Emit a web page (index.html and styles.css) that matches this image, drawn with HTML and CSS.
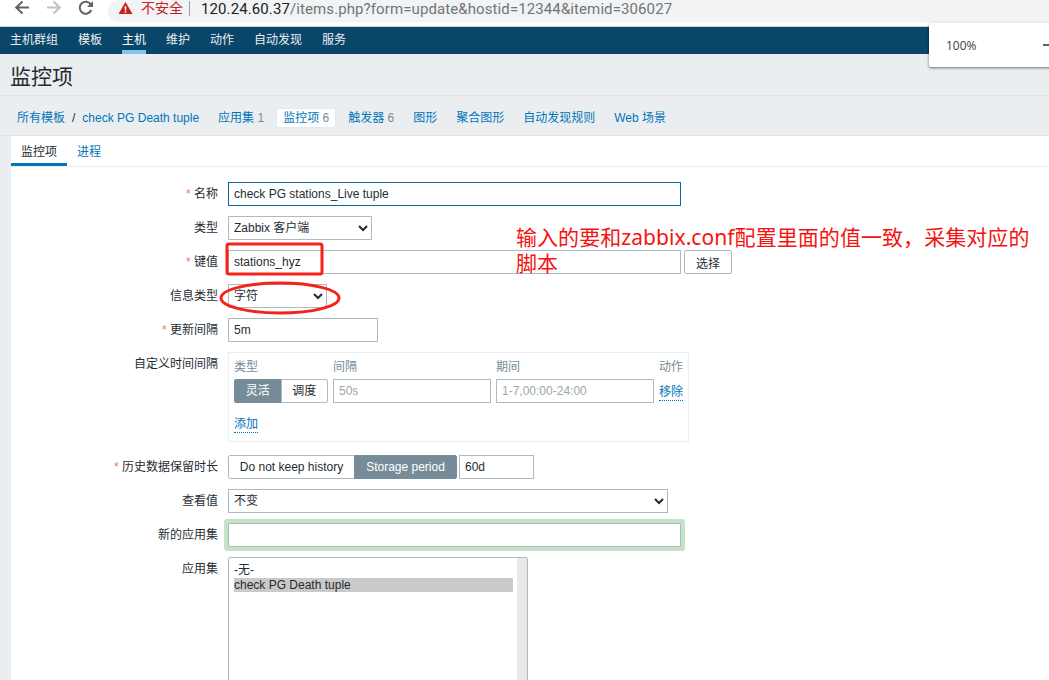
FILE: index.html
```html
<!DOCTYPE html>
<html lang="zh">
<head>
<meta charset="utf-8">
<title>监控项</title>
<link rel="stylesheet" href="styles.css">
</head>
<body>
<div class="toolbar">
  <svg class="tb-icon" width="16" height="16" viewBox="0 0 16 16"><path d="M15 7.5H3M8.5 1.5 2.2 7.5l6.3 6" fill="none" stroke="#5f6368" stroke-width="2"/></svg>
  <svg class="tb-icon" width="16" height="16" viewBox="0 0 16 16"><path d="M1 7.5h12M7.5 1.5l6.3 6-6.3 6" fill="none" stroke="#bdc1c6" stroke-width="2"/></svg>
  <svg class="tb-icon" width="16" height="16" viewBox="0 0 16 16"><path d="M13.3 10a6 6 0 1 1-.3-5.2" fill="none" stroke="#5f6368" stroke-width="2"/><path d="M15 1v6H9z" fill="#5f6368"/></svg>
  <div class="urlbar">
    <svg width="15" height="14" viewBox="0 0 16 14"><path d="M8 .5 15.5 13.5H.5z" fill="#c5221f"/><path d="M7.2 5h1.6v4.6H7.2zM7.2 10.4h1.6V12H7.2z" fill="#fff"/></svg>
    <span class="insecure">不安全</span>
    <span class="url-sep"></span>
    <span class="url"><span class="url-host">120.24.60.37</span>/items.php?form=update&amp;hostid=12344&amp;itemid=306027</span>
  </div>
</div>

<nav class="topnav">
  <a class="nav-item">主机群组</a>
  <a class="nav-item">模板</a>
  <a class="nav-item active">主机</a>
  <a class="nav-item">维护</a>
  <a class="nav-item">动作</a>
  <a class="nav-item">自动发现</a>
  <a class="nav-item">服务</a>
</nav>

<header class="page-title"><h1>监控项</h1></header>

<div class="crumbs">
  <a class="crumb first">所有模板</a><span class="slash">/</span><a class="crumb host">check PG Death tuple</a>
  <a class="crumb">应用集 <span class="count">1</span></a>
  <a class="crumb current">监控项 <span class="count">6</span></a>
  <a class="crumb">触发器 <span class="count">6</span></a>
  <a class="crumb">图形</a>
  <a class="crumb">聚合图形</a>
  <a class="crumb">自动发现规则</a>
  <a class="crumb">Web 场景</a>
</div>

<main class="panel">
  <div class="tabs">
    <a class="tab active">监控项</a>
    <a class="tab">进程</a>
  </div>

  <form class="form">
    <label class="lbl"><i>*</i> 名称</label>
    <div class="field"><input class="input w-453 focused" value="check PG stations_Live tuple"></div>

    <label class="lbl">类型</label>
    <div class="field"><select class="select w-144"><option>Zabbix 客户端</option></select></div>

    <label class="lbl"><i>*</i> 键值</label>
    <div class="field"><input class="input w-453" value="stations_hyz"><button type="button" class="btn">选择</button></div>

    <label class="lbl">信息类型</label>
    <div class="field"><select class="select w-99"><option>字符</option></select></div>

    <label class="lbl"><i>*</i> 更新间隔</label>
    <div class="field"><input class="input w-150" value="5m"></div>

    <label class="lbl">自定义时间间隔</label>
    <div class="field">
      <div class="intervals">
        <span class="th">类型</span><span class="th">间隔</span><span class="th">期间</span><span class="th">动作</span>
        <div class="seg"><span class="seg-btn on w-48">灵活</span><span class="seg-btn w-47">调度</span></div>
        <input class="input ph" placeholder="50s">
        <input class="input ph" placeholder="1-7,00:00-24:00">
        <a class="dotted">移除</a>
        <a class="dotted add">添加</a>
      </div>
    </div>

    <label class="lbl hist"><i>*</i> 历史数据保留时长</label>
    <div class="field hist">
      <div class="seg"><span class="seg-btn w-127">Do not keep history</span><span class="seg-btn on w-103">Storage period</span></div>
      <input class="input w-75" value="60d">
    </div>

    <label class="lbl">查看值</label>
    <div class="field"><select class="select w-440"><option>不变</option></select></div>

    <label class="lbl">新的应用集</label>
    <div class="field"><input class="input w-453 glow"></div>

    <label class="lbl">应用集</label>
    <div class="field">
      <div class="listbox">
        <div class="options">
          <div class="opt">-无-</div>
          <div class="opt sel">check PG Death tuple</div>
        </div>
        <div class="scroll"></div>
      </div>
    </div>
  </form>
</main>

<div class="zoom-pop"><span>100%</span><span class="minus"></span></div>

<svg class="mark mark-rect" width="102" height="36" viewBox="0 0 102 36"><rect x="2" y="2" width="95" height="30" rx="2" fill="none" stroke="#f5211a" stroke-width="3"/></svg>
<svg class="mark mark-oval" width="124" height="36" viewBox="0 0 124 36"><ellipse cx="61" cy="17" rx="59" ry="15" fill="none" stroke="#f5211a" stroke-width="3"/></svg>
<div class="note"><span>输入的要和<span class="note-latin">zabbix.conf</span>配置里面的值一致，采集对应的</span><span>脚本</span></div>
</body>
</html>
```
FILE: styles.css
```css
* { box-sizing: border-box; }
html, body { margin: 0; height: 680px; overflow: hidden; }
body {
  position: relative;
  background: #ebeef0;
  color: #1f2c33;
  font: 12px/14px "Liberation Sans", "Noto Sans CJK SC", sans-serif;
}

/* browser chrome */
.toolbar {
  height: 27px;
  background: #fff;
  border-bottom: 1px solid #d4d4d4;
  display: flex;
  align-items: flex-start;
  padding-left: 14px;
}
.tb-icon { margin-right: 16px; flex: none; }
.tb-icon:nth-child(3) { margin-right: 14px; }
.urlbar {
  flex: 1;
  height: 22px;
  background: #f1f3f4;
  border-radius: 14px 0 0 14px;
  display: flex;
  align-items: flex-start;
  padding: 1px 0 0 10px;
  white-space: nowrap;
}
.insecure { color: #c5221f; font-size: 14px; line-height: 14px; margin-left: 8px; }
.url-sep { width: 1px; height: 15px; background: #9aa0a6; margin: 0 11px 0 6px; }
.url { font: 15px/18px Roboto, sans-serif; color: #70757a; margin-top: -1px; letter-spacing: .1px; }
.url-host { color: #202124; }

/* top navigation */
.topnav {
  height: 27px;
  background: #0a466a;
  display: flex;
  gap: 20px;
  padding-left: 10px;
}
.nav-item {
  color: #ebeef0;
  height: 27px;
  line-height: 27px;
  border-bottom: 4px solid transparent;
}
.nav-item.active { border-bottom-color: #7fc5ef; color: #fff; }

.page-title {
  height: 42px;
  padding-left: 10px;
  border-bottom: 1px solid #dfe4e7;
}
.page-title h1 {
  margin: 0;
  font-size: 21px;
  font-weight: 400;
  line-height: 45px;
}

.crumbs {
  height: 40px;
  display: flex;
  align-items: center;
  padding: 4px 0 0 17px;
  border-bottom: 1px solid #dfe4e7;
  white-space: nowrap;
}
.crumb { color: #0275b8; margin-right: 19px; }
.crumb.first { margin-right: 0; }
.slash { color: #1f2c33; margin: 0 7px 0 7px; }
.crumb.current {
  background: #fff;
  border: 1px solid #e6e9eb;
  border-radius: 2px;
  padding: 2px 6px;
  margin: 0 12px 0 -7px;
}
.count { color: #768d99; }

/* content */
.panel {
  margin-left: 11px;
  background: #fff;
  height: 560px;
  overflow: hidden;
}
.tabs {
  height: 31px;
  display: flex;
  border-bottom: 1px solid #ebeef0;
}
.tab {
  padding: 9px 10px 0;
  height: 30px;
  color: #0275b8;
}
.tab.active { color: #1f2c33; border-bottom: 3px solid #0275b8; }
.form {
  display: grid;
  grid-template-columns: 207px 1fr;
  column-gap: 10px;
  row-gap: 10px;
  padding-top: 15px;
}
.lbl { text-align: right; line-height: 24px; color: #1f2c33; }
.lbl i { color: #e5746a; font-style: normal; }
.field { display: flex; align-items: flex-start; }
.lbl.hist, .field.hist { margin-top: 3px; }

.input, .select, .btn {
  height: 24px;
  border: 1px solid #acbbc2;
  background: #fff;
  color: #1f2c33;
  font: 12px "Liberation Sans", "Noto Sans CJK SC", sans-serif;
  border-radius: 0;
  outline: 0;
}
.input { padding: 0 5px; }
.select { padding: 0 0 0 1px; }
.input.focused { border-color: #0a6aa1; }
.input::placeholder { color: #9aa7ae; }
.w-453 { width: 453px; }
.w-150 { width: 150px; }
.w-144 { width: 144px; }
.w-99 { width: 99px; }
.w-440 { width: 440px; }
.w-75 { width: 75px; margin-left: 2px; }
.btn {
  width: 48px;
  margin-left: 3px;
  border-radius: 2px;
  padding: 0;
}
.input.glow { box-shadow: 0 0 0 4px #c6e2c8; border-radius: 1px; }

.intervals {
  width: 461px;
  height: 90px;
  border: 1px solid #ebeef0;
  padding: 5px;
  display: grid;
  grid-template-columns: 94px 158px 158px 25px;
  grid-template-rows: 15px 24px auto;
  column-gap: 5px;
  row-gap: 6px;
  align-content: start;
}
.th { color: #768d99; line-height: 19px; }
.seg { display: flex; }
.seg-btn {
  height: 24px;
  line-height: 23px;
  text-align: center;
  border: 1px solid #acbbc2;
  background: #fff;
  display: block;
}
.seg-btn:first-child { border-radius: 2px 0 0 2px; }
.seg-btn:last-child { border-radius: 0 2px 2px 0; margin-left: -1px; }
.seg-btn.on { background: #768d99; border-color: #768d99; color: #fff; }
.w-48 { width: 48px; }
.w-47 { width: 48px; }
.seg-btn.w-47 { width: 48px; }
.w-127 { width: 127px; }
.w-103 { width: 103px; }
.input.ph { width: 158px; }
.dotted {
  color: #0275b8;
  border-bottom: 1px dotted #0275b8;
  align-self: center;
  justify-self: start;
  line-height: 15px;
  margin-top: 3px;
}
.add { grid-column: 1; margin-top: 8px; align-self: start; }

.listbox {
  width: 300px;
  height: 140px;
  border: 1px solid #acbbc2;
  border-radius: 2px 2px 0 0;
  display: flex;
}
.options { flex: 1; padding: 5px 4px 0 5px; }
.opt { line-height: 14px; height: 14px; color: #1f2c33; }
.sel { background: #cacaca; margin-top: 1px; }
.scroll { width: 10px; background: #e9e9e9; }

/* overlays */
.zoom-pop {
  position: absolute;
  left: 929px;
  top: 23px;
  width: 130px;
  height: 44px;
  background: #fff;
  border-radius: 2px;
  box-shadow: 0 1px 3px rgba(0,0,0,.55);
  display: flex;
  align-items: center;
  padding: 2px 0 0 17px;
  color: #3c4043;
  font-family: "Open Sans", sans-serif;
}
.minus {
  position: absolute;
  left: 114px;
  top: 21px;
  width: 8px;
  height: 2px;
  background: #5f6368;
}
.mark { position: absolute; }
.mark-rect { left: 225px; top: 242px; }
.mark-oval { left: 219px; top: 281px; }
.note {
  position: absolute;
  left: 516px;
  top: 224px;
  display: flex;
  flex-direction: column;
  align-items: flex-start;
  color: #f5130f;
  font-size: 21px;
  line-height: 26px;
  letter-spacing: .06px;
  white-space: nowrap;
}
.note-latin { font-family: "Noto Sans", sans-serif; }
```
